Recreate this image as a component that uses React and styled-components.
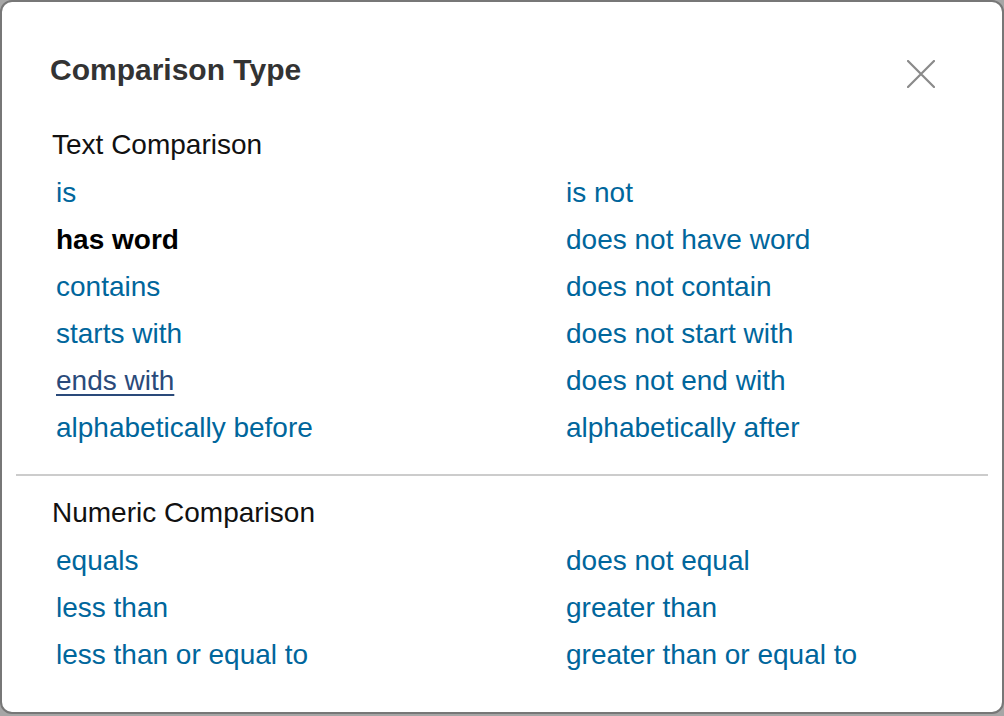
import React from "react";
import styled, { createGlobalStyle } from "styled-components";

const GlobalStyle = createGlobalStyle`
  html, body {
    margin: 0;
    padding: 0;
    background: #a6a6a6;
  }
  body {
    font-family: "Liberation Sans", Arial, sans-serif;
  }
`;

const Dialog = styled.div`
  box-sizing: border-box;
  width: 1004px;
  height: 714px;
  background: #ffffff;
  border: 2px solid #777777;
  border-radius: 12px;
  padding: 0 14px;
`;

const Header = styled.div`
  display: flex;
  align-items: center;
  justify-content: space-between;
  padding: 50px 53px 0 34px;
`;

const Title = styled.h2`
  margin: 0;
  font-size: 30px;
  line-height: 36px;
  font-weight: 700;
  color: #333333;
`;

const CloseButton = styled.button`
  width: 28px;
  height: 28px;
  margin-top: 8px;
  padding: 0;
  border: none;
  background: none;
  cursor: pointer;
  display: flex;
  align-items: center;
  justify-content: center;
`;

const Section = styled.div`
  padding: ${(p) => p.$top}px 0 0 36px;
`;

const SectionTitle = styled.h3`
  margin: 0 0 8px;
  font-size: 28px;
  line-height: 32px;
  font-weight: 400;
  color: #111111;
`;

const Options = styled.div`
  display: grid;
  grid-template-columns: 510px 1fr;
  padding-left: 4px;
`;

const Option = styled.a`
  display: block;
  justify-self: start;
  font-size: 28px;
  line-height: 47px;
  color: ${(p) => (p.$selected ? "#000000" : p.$focused ? "#2a4a7a" : "#00669c")};
  font-weight: ${(p) => (p.$selected ? 700 : 400)};
  text-decoration: ${(p) => (p.$focused ? "underline" : "none")};
  text-decoration-thickness: 2px;
  text-underline-offset: 4px;
  cursor: pointer;
`;

const Divider = styled.hr`
  margin: 23px 0 0;
  border: none;
  border-top: 2px solid #cccccc;
`;

const textOptions = [
  ["is", "is not"],
  ["has word", "does not have word"],
  ["contains", "does not contain"],
  ["starts with", "does not start with"],
  ["ends with", "does not end with"],
  ["alphabetically before", "alphabetically after"],
];

const numericOptions = [
  ["equals", "does not equal"],
  ["less than", "greater than"],
  ["less than or equal to", "greater than or equal to"],
];

function OptionGrid({ rows, selected, focused }) {
  return (
    <Options>
      {rows.flat().map((label) => (
        <Option
          key={label}
          $selected={label === selected}
          $focused={label === focused}
        >
          {label}
        </Option>
      ))}
    </Options>
  );
}

export default function App() {
  return (
    <>
      <GlobalStyle />
      <Dialog>
        <Header>
          <Title>Comparison Type</Title>
          <CloseButton aria-label="Close">
            <svg width="28" height="28" viewBox="0 0 28 28">
              <path
                d="M1 1 L27 27 M27 1 L1 27"
                stroke="#8a8a8a"
                strokeWidth="2.2"
                strokeLinecap="round"
              />
            </svg>
          </CloseButton>
        </Header>
        <Section $top={41}>
          <SectionTitle>Text Comparison</SectionTitle>
          <OptionGrid rows={textOptions} selected="has word" focused="ends with" />
        </Section>
        <Divider />
        <Section $top={21}>
          <SectionTitle>Numeric Comparison</SectionTitle>
          <OptionGrid rows={numericOptions} />
        </Section>
      </Dialog>
    </>
  );
}
